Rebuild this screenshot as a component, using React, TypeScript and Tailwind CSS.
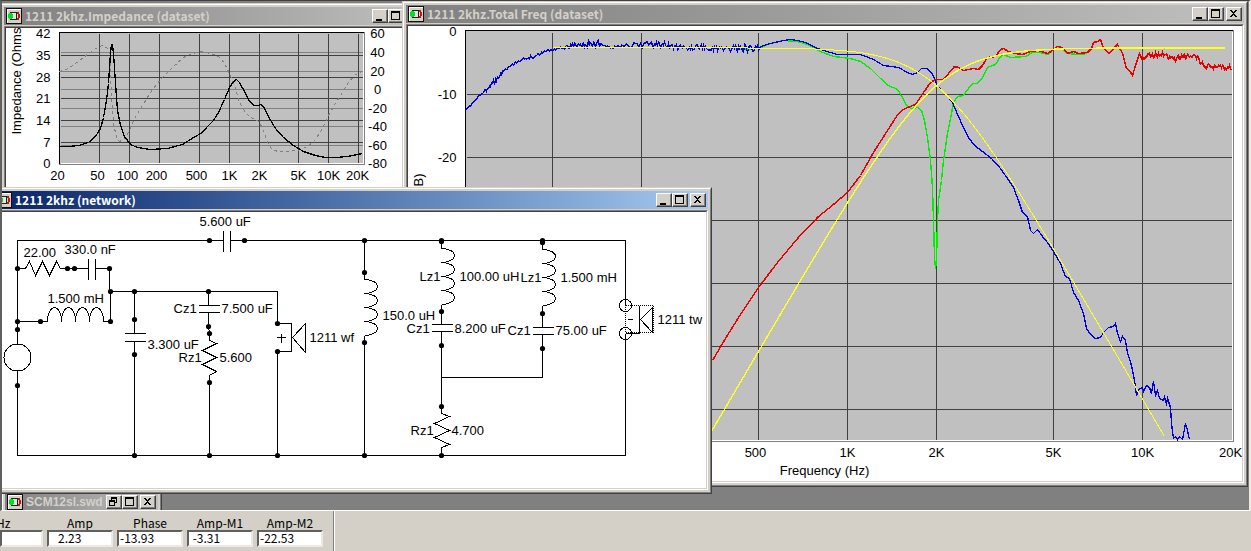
import type { ReactNode } from "react";
import clsx from "clsx";

const LINE = "#404040";

/* ---------- window chrome ---------- */

function AppIcon() {
  return (
    <svg width="16" height="16" viewBox="0 0 16 16" className="shrink-0" shapeRendering="crispEdges">
      <rect width="16" height="16" fill="#101010" />
      <rect x="1" y="1" width="14" height="14" fill="#d4d0c8" />
      <path d="M1 1h14v1H2v13H1z" fill="#fff" />
      <path d="M4 4h8v1H4zM4 11h8v1H4zM10 4h1v8h-1z" fill="#202020" />
      <rect x="6" y="5" width="4" height="6" fill="#e4e4e0" />
      <path d="M2 6h1V5h3v1h1v4H6v1H3v-1H2z" fill="#00e020" />
      <path d="M11 4h2v2h1v4h-1v2h-2v-2h1V6h-1z" fill="#c01818" />
    </svg>
  );
}

const glyphs = {
  Minimize: "M3 9h6v2H3z",
  Maximize: "M2 1h9v9H2zM3 3v6h7V3z",
  Restore: "M4 1h6v6H8V6h1V3H5v1H4zM2 4h6v6H2zM3 6v3h4V6z",
  Close: "M3 2h2v1h1v1h1V3h1V2h2v1H9v1H8v1H7v1h1v1h1v1h1v1H8V8H7V7H6v1H5v1H3V8h1V7h1V6h1V5H5V4H4V3H3z",
};

function CaptionButton({ kind }: { kind: keyof typeof glyphs }) {
  return (
    <button
      type="button"
      aria-label={kind}
      className="h-3.5 w-4 border border-t-white border-l-white border-r-[#404040] border-b-[#404040] bg-[#d4d0c8] shadow-[inset_-1px_-1px_0_#808080]"
    >
      <svg width="13" height="12" viewBox="0 0 13 12" shapeRendering="crispEdges">
        <path d={glyphs[kind]} fillRule="evenodd" />
      </svg>
    </button>
  );
}

type WindowProps = {
  title: string;
  className: string;
  active?: boolean;
  minimized?: boolean;
  children?: ReactNode;
};

function MdiWindow({ title, className, active, minimized, children }: WindowProps) {
  return (
    <section
      className={clsx(
        "absolute border border-t-[#d4d0c8] border-l-[#d4d0c8] border-r-[#404040] border-b-[#404040]",
        className,
      )}
    >
      <div className="border border-t-white border-l-white border-r-[#808080] border-b-[#808080] bg-[#d4d0c8] p-0.5">
        <header
          className={clsx(
            "flex h-[18px] items-center gap-[3px] bg-linear-to-r px-0.5",
            active ? "from-[#0a246a] to-[#a6caf0] text-white" : "from-[#808080] to-[#c0c0c0] text-[#d4d0c8]",
          )}
        >
          <AppIcon />
          <h2
            className={clsx(
              "flex-1 whitespace-nowrap text-xs font-bold",
              minimized ? "font-['Liberation_Sans',sans-serif]" : "font-['Noto_Sans_CJK_JP',sans-serif]",
            )}
          >
            {title}
          </h2>
          <div className="flex">
            <CaptionButton kind={minimized ? "Restore" : "Minimize"} />
            <CaptionButton kind="Maximize" />
          </div>
          <div className="-ml-px flex">
            <CaptionButton kind="Close" />
          </div>
        </header>
        {children && (
          <div className="mt-px border border-t-[#808080] border-l-[#808080] border-r-white border-b-white">
            <div className="border border-t-[#404040] border-l-[#404040] border-r-[#d4d0c8] border-b-[#d4d0c8] bg-white">
              {children}
            </div>
          </div>
        )}
      </div>
    </section>
  );
}

/* ---------- drawing helpers ---------- */

type LabelProps = { x: number; y: number; anchor?: "start" | "middle" | "end"; children: ReactNode };

function Label({ x, y, anchor = "start", children }: LabelProps) {
  return (
    <text x={x} y={y} textAnchor={anchor}>
      {children}
    </text>
  );
}

const svgClass = "block font-['Liberation_Sans',sans-serif] text-[13px]";

// small deterministic generator so the measured traces keep the same ripple
function ripple(points: [number, number, number][], step: number, seed: number) {
  let s = seed;
  const out: string[] = [];
  for (let i = 0; i < points.length - 1; i++) {
    const [x0, y0, a] = points[i];
    const [x1, y1] = points[i + 1];
    for (let x = x0; x < x1; x += step) {
      s = (s * 16807) % 2147483647;
      const r = (s / 2147483647) * 2 - 1;
      const y = y0 + ((y1 - y0) * (x - x0)) / (x1 - x0) + r * a;
      out.push(`${x},${y.toFixed(1)}`);
    }
  }
  return out.join(" ");
}

/* ---------- impedance chart ---------- */

const impedanceTrace =
  "59,146 68,146 78,145 88,142 95,136 100,128 103,117 106,100 108,83 110,53 111,44 112,44 113,53 115,83 117,110 120,125 124,136 130,144 137,147 150,149 167,148 182,144 193,137 202,132 207,126 213,120 218,112 224,99 229,87 233,81 236,79 239,82 245,93 249,101 254,105 257,105 261,104 264,108 269,118 275,128 283,137 293,145 303,151 315,155 325,157 335,157 347,156 357,154 362,153";

const phaseTrace =
  "59,71 68,68 78,61 88,53 97,47 102,45 106,47 109,52 110,70 111,97 113,123 116,137 119,141 123,139 128,132 133,120 142,105 150,92 160,79 172,67 183,57 192,53 202,51 213,54 220,57 225,65 230,75 235,88 239,102 245,112 250,117 257,120 262,127 267,142 271,148 277,151 287,151 297,150 307,146 315,139 322,128 328,115 335,103 342,92 348,82 355,74 362,71";

const impedanceX: [string, number, number][] = [
  ["20", 59, 57], ["50", 99, 97], ["100", 129, 127], ["200", 159, 156], ["500", 199, 196],
  ["1K", 229, 229], ["2K", 259, 259], ["5K", 298, 298], ["10K", 328, 328], ["20K", 358, 357],
];
const ohms: [number, number][] = [[42, 33], [35, 55], [28, 77], [21, 98], [14, 120], [7, 142], [0, 163]];
const degrees: [number, number][] = [
  [60, 33], [40, 52], [20, 71], [0, 89], [-20, 108], [-40, 126], [-60, 145], [-80, 163],
];

function ImpedanceChart() {
  return (
    <svg width="416" height="170" viewBox="5.5 27.5 416 170" className={svgClass}>
      <g shapeRendering="crispEdges" fill="none">
        <rect x="59" y="32" width="305" height="132" fill="#c0c0c0" stroke="#808080" />
        {degrees.slice(1, -1).map(([v, y]) => (
          <path key={v} d={`M60 ${y}H362`} stroke="#808080" />
        ))}
        {impedanceX.slice(1).map(([t, x]) => (
          <path key={t} d={`M${x} 33V163`} stroke={LINE} />
        ))}
        {ohms.slice(1, -1).map(([v, y]) => (
          <path key={v} d={`M60 ${y}H362`} stroke={LINE} />
        ))}
        <path d="M59 163V32H363" stroke="#000" />
        <path d="M60 163H363V33" stroke="#fff" />
        <polyline points={phaseTrace} stroke="#808080" strokeDasharray="3 3" />
        <polyline points={impedanceTrace} stroke="#000" strokeWidth="1.3" />
      </g>
      {ohms.map(([v, y]) => (
        <Label key={v} x={50} y={y + 4} anchor="end">{v}</Label>
      ))}
      {degrees.map(([v, y]) => (
        <Label key={v} x={377} y={y + 4} anchor="middle">{v}</Label>
      ))}
      {impedanceX.map(([t, , x]) => (
        <Label key={t} x={x} y={179} anchor="middle">{t}</Label>
      ))}
      <text transform="translate(20 134) rotate(-90)">Impedance (Ohms</text>
    </svg>
  );
}

/* ---------- total frequency chart ---------- */

const freqX: [string, number, number][] = [
  ["100", 552, 552], ["200", 641, 641], ["500", 758, 755], ["1K", 847, 847],
  ["2K", 936, 936], ["5K", 1053, 1053], ["10K", 1142, 1142], ["20K", 1231, 1230],
];
const freqY = [94, 157, 220, 283, 346, 409];

const wooferTrace = [
  ripple([[465, 110, 1], [472, 103, 1], [477, 96, 1], [483, 92, 2], [490, 86, 3], [497, 78, 3], [503, 71, 1], [512, 64, 1], [522, 59, 1], [528, 57, 2], [534, 56, 2], [543, 51, 1], [552, 49, 1], [563, 47, 2], [572, 46, 0]], 1, 77),
  ripple([[572, 44, 3], [580, 43, 4], [600, 43, 1], [604, 46, 2], [630, 45, 3], [642, 43, 4], [665, 46, 3], [690, 47, 3], [735, 48, 5], [758, 49, 0]], 1, 4242),
  "758,50 760,46 770,43 783,40 790,39 797,40 805,42 817,48 830,52 837,54 860,54 873,59 883,65 898,67 907,72 912,74 917,72 921,68 926,68 931,72 934,78 937,86 945,93 952,102 957,114 963,127 968,137 974,145 982,151 991,158 1000,168 1007,178 1013,187 1018,200 1022,212 1027,216 1030,230 1033,233 1037,229 1042,236 1047,242 1053,251 1060,263 1065,276 1069,278 1073,292 1078,300 1083,313 1086,328 1090,334 1095,338 1100,337 1103,332 1108,327 1113,326 1115,323 1117,333 1120,341 1122,336 1125,340 1127,352 1131,365 1134,380 1136,395 1138,389 1142,387 1143,391 1146,385 1149,387 1151,393 1153,381 1155,395 1157,390 1159,398 1163,400 1164,397 1166,403 1167,398 1170,407 1171,423 1173,438 1175,436 1177,439 1179,436 1182,439 1185,423 1187,430 1189,439",
].join(" ");

const tweeterTrace =
  "712,360 725,338 740,314 758,287 777,262 797,238 818,216 833,204 847,192 860,175 873,152 887,130 898,113 903,109 907,107 915,104 923,92 930,82 935,79 943,79 948,73 954,66 958,67 963,70 973,68 978,69 982,65 987,57 995,56 1000,49 1003,48 1008,51 1015,53 1022,54 1030,51 1038,50 1047,53 1052,50 1057,46 1062,47 1067,53 1073,51 1078,53 1087,52 1091,48 1093,42 1097,41 1100,39 1103,48 1109,53 1113,48 1117,44 1122,53 1126,68 1129,70 1132,75 1135,65 " +
  ripple([[1139, 56, 3], [1160, 54, 3], [1172, 59, 3], [1187, 55, 3], [1197, 58, 3], [1205, 66, 3], [1220, 66, 3], [1232, 68, 0]], 1, 991);

const sumTrace =
  "737,49 758,48 770,43 783,40 797,41 807,44 820,51 833,56 850,58 860,61 870,68 880,78 888,85 897,89 902,97 906,105 911,108 917,107 921,110 924,120 927,137 930,160 932,187 933,220 934,257 935,268 936,260 937,220 938,200 941,180 943,160 947,133 951,113 953,102 957,96 963,95 968,88 972,83 977,83 982,77 987,67 995,64 1000,56 1003,54 1010,57 1025,56 1032,52 1040,52 1047,54 1052,51 1057,46 1062,48 1067,53 1078,54 1087,53 1091,49";

// fourth-order Linkwitz-Riley targets at 2 kHz, 89 px per octave and 6.3 px per dB
function target(side: 1 | -1, from: number, to: number) {
  const out: string[] = [];
  for (let x = from; x <= to; x += 4) {
    const ratio = 2 ** ((side * (x - 936)) / 89);
    const y = 47.3 + 6.3 * 20 * Math.log10(1 + ratio ** 4);
    if (y < 440) out.push(`${x},${y.toFixed(1)}`);
  }
  return out.join(" ");
}

function TotalFreqChart() {
  return (
    <svg width="834" height="455" viewBox="407.5 25.5 834 455" className={svgClass}>
      <g shapeRendering="crispEdges" fill="none">
        <rect x="465" y="30" width="768" height="411" fill="#c0c0c0" stroke="#808080" />
        {freqX.slice(0, -1).map(([t, x]) => (
          <path key={t} d={`M${x} 32V440`} stroke={LINE} />
        ))}
        {freqY.map((y) => (
          <path key={y} d={`M466 ${y}H1231`} stroke={LINE} />
        ))}
        <path d="M465 440V30H1232" stroke="#000" />
        <path d="M466 440H1232V31" stroke="#fff" />
        <polyline points={sumTrace} stroke="#00f000" strokeWidth="1.4" />
        <polyline points={wooferTrace} stroke="#0000e0" strokeWidth="1.3" />
        <polyline points={tweeterTrace} stroke="#e80000" strokeWidth="1.5" />
        <polyline points={target(1, 552, 1166)} stroke="#ffff20" />
        <polyline points={target(-1, 708, 1224)} stroke="#ffff20" strokeWidth="1.4" />
      </g>
      <Label x={456} y={35} anchor="end">0</Label>
      <Label x={456} y={98} anchor="end">-10</Label>
      <Label x={456} y={161} anchor="end">-20</Label>
      {freqX.map(([t, , x]) => (
        <Label key={t} x={x} y={456} anchor="middle">{t}</Label>
      ))}
      <Label x={824} y={474} anchor="middle">Frequency (Hz)</Label>
      <text transform="translate(422 173) rotate(-90)" textAnchor="end">(dB)</text>
    </svg>
  );
}

/* ---------- crossover network ---------- */

const wires = [
  "M209 240H17V343 M17 371V455H625V333 M209 240H223 M230 240H625V305",
  // series notch around the woofer inductor
  "M17 268H25L29 261 35 275 42 261 49 275 56 261 60 268H88 M95 268H109V291 M17 321H47 M103 321H110V291H277V323",
  "M134 291V333 M134 341V455 M208 291V305 M208 312V326L209 333V340L216 343 202 350 216 357 202 364 216 371 209 375V455",
  // shunt legs
  "M364 240V279 M364 335V455 M441 240V248 M441 304V324 M441 331V413L449 416 434 423 449 430 434 437 449 444 441 447V455",
  "M542 240V249 M542 305V327 M542 334V377H441",
  // capacitor plates
  "M223 230V251 M230 230V251 M88 258V279 M95 258V279 M124 333H145 M124 341H145 M198 305H219 M198 312H219",
  "M431 324H452 M431 331H452 M532 327H553 M532 334H553",
  // woofer
  "M277 323H291V351H277V455 M292 337L305 323V352Z M281 333V342 M276 337H285",
  // tweeter
  "M639 305V333H625 M640 319L652 307V332Z M627 319H632",
].join(" ");

const coils = [
  "M47 321A7 14 0 0 1 61 321A7 14 0 0 1 75 321A7 14 0 0 1 89 321A7 14 0 0 1 103 321",
  "M364 279A13 7 0 0 1 364 293H363H364A13 7 0 0 1 364 307H363H364A13 7 0 0 1 364 321H363H364A13 7 0 0 1 364 335",
  "M441 248A13 7 0 0 1 441 262H440H441A13 7 0 0 1 441 276H440H441A13 7 0 0 1 441 290H440H441A13 7 0 0 1 441 304",
  "M542 249A13 7 0 0 1 542 263H541H542A13 7 0 0 1 542 277H541H542A13 7 0 0 1 542 291H541H542A13 7 0 0 1 542 305",
].join(" ");

const nodes = [
  [209, 240], [244, 240], [364, 240], [441, 240], [542, 240], [441, 241], [542, 242],
  [17, 268], [67, 268], [74, 268], [109, 268], [17, 321], [40, 321], [110, 321], [17, 329], [17, 385],
  [110, 291], [134, 291], [208, 291], [134, 319], [134, 354], [208, 326], [209, 333], [209, 382],
  [277, 323], [277, 351], [364, 272], [364, 342], [441, 311], [441, 345], [441, 406],
  [542, 313], [542, 348], [134, 455], [209, 455], [277, 455], [364, 455], [441, 455],
];

const parts: [string, number, number][] = [
  ["5.600 uF", 199, 225], ["22.00", 23, 256], ["330.0 nF", 64, 253], ["1.500 mH", 47, 302],
  ["3.300 uF", 147, 348], ["Cz1", 173, 312], ["7.500 uF", 221, 312], ["Rz1", 178, 361],
  ["5.600", 219, 361], ["1211 wf", 309, 341], ["150.0 uH", 382, 319],
  ["Lz1", 419, 280], ["100.00 uH", 459, 280], ["Cz1", 406, 332], ["8.200 uF", 454, 332],
  ["Rz1", 410, 434], ["4.700", 451, 434], ["Lz1", 520, 281], ["1.500 mH", 560, 281],
  ["Cz1", 507, 334], ["75.00 uF", 555, 334], ["1211 tw", 657, 323],
];

function NetworkSchematic() {
  return (
    <svg width="710" height="276" viewBox="-4.5 211.5 710 276" className={svgClass}>
      <g shapeRendering="crispEdges" fill="none" stroke="#000">
        <path d={wires} />
        <path d={coils} />
        <circle cx="17" cy="357" r="13.5" />
        <circle cx="625" cy="305" r="6" />
        <circle cx="625" cy="333" r="6" />
        <rect x="625" y="305" width="28" height="27" strokeDasharray="1 1" />
      </g>
      {nodes.map(([x, y]) => (
        <circle key={`${x}-${y}`} cx={x} cy={y} r="2.6" />
      ))}
      {parts.map(([t, x, y]) => (
        <Label key={`${t}-${x}`} x={x} y={y}>{t}</Label>
      ))}
    </svg>
  );
}

/* ---------- cursor readout ---------- */

const readouts = [
  { id: "amp", label: "Amp", value: "   2.23" },
  { id: "phase", label: "Phase", value: "-13.93" },
  { id: "amp-m1", label: "Amp-M1", value: " -3.31" },
  { id: "amp-m2", label: "Amp-M2", value: "-22.53" },
];

const fieldClass =
  "h-[17px] w-full border-2 border-t-[#606060] border-l-[#606060] border-r-[#ece9e4] border-b-[#ece9e4] bg-white px-px pb-0.5 leading-3";

function StatusBar() {
  return (
    <footer className="flex h-10 shrink-0 bg-[#d4d0c8] font-['Noto_Sans_CJK_JP',sans-serif] text-xs">
      <div className="flex gap-1 border-r border-[#808080] pt-1 pr-2.5">
        <div className="w-[43px]">
          <label htmlFor="hz" className="-ml-1 block h-[15px] leading-4">Hz</label>
          <input id="hz" readOnly className={fieldClass} />
        </div>
        {readouts.map((r) => (
          <div key={r.id} className="w-[66px]">
            <label htmlFor={r.id} className="block h-[15px] text-center leading-4">{r.label}</label>
            <input id={r.id} readOnly defaultValue={r.value} className={fieldClass} />
          </div>
        ))}
      </div>
      <div className="flex-1 border-l border-white" />
    </footer>
  );
}

export default function App() {
  return (
    <div className="flex h-screen flex-col overflow-hidden bg-[#d4d0c8] text-black">
      <main className="relative flex-1 overflow-hidden border-t border-r-2 border-b border-l-2 border-t-[#404040] border-r-[#ece9e4] border-b-white border-l-[#606060] bg-[#808080]">
        <MdiWindow title="1211 2khz.Impedance (dataset)" className="top-0.5 -left-0.5">
          <ImpedanceChart />
        </MdiWindow>
        <MdiWindow title="1211 2khz.Total Freq (dataset)" className="top-0 left-[400px]">
          <TotalFreqChart />
        </MdiWindow>
        <MdiWindow title="SCM12sl.swd" minimized className="top-[488px] -left-px w-[161px]" />
        <MdiWindow title="1211 2khz (network)" active className="top-[186px] -left-3">
          <NetworkSchematic />
        </MdiWindow>
      </main>
      <StatusBar />
    </div>
  );
}
